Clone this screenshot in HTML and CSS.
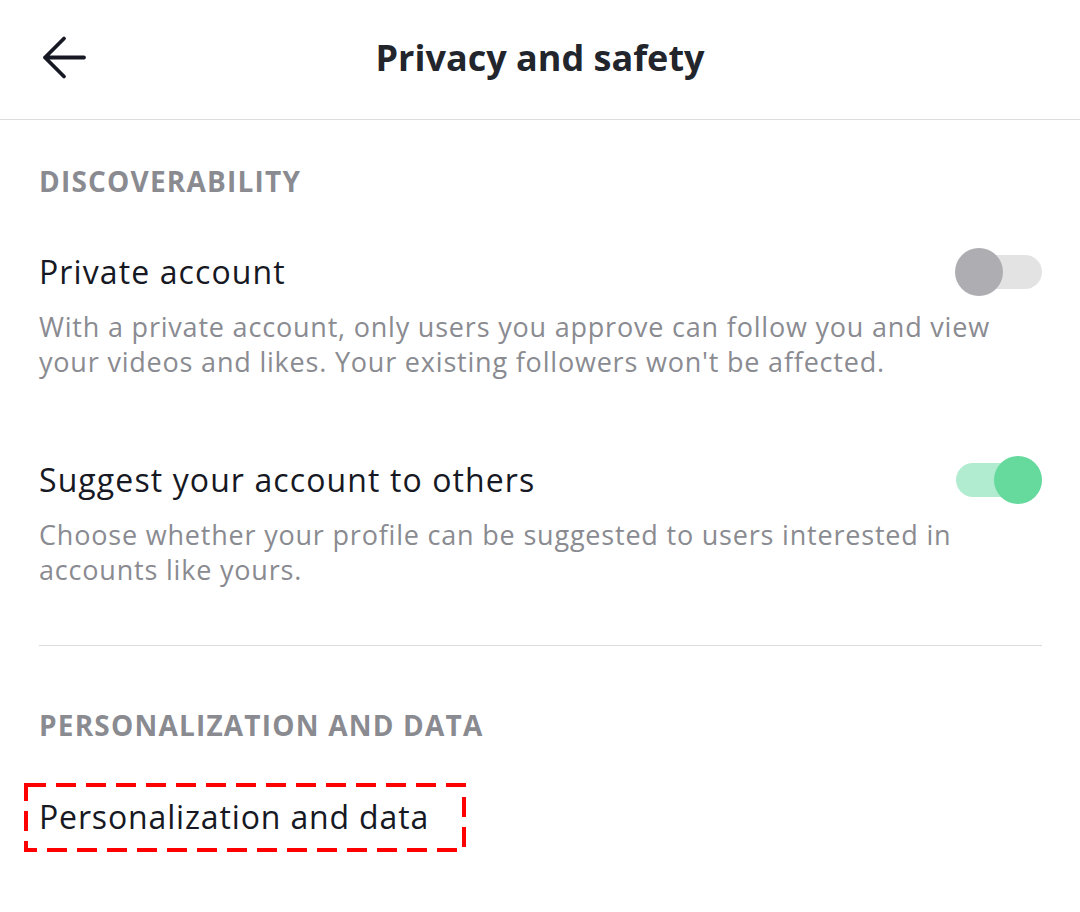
FILE: index.html
```html
<!DOCTYPE html>
<html>
<head>
<meta charset="utf-8">
<link rel="stylesheet" href="styles.css">
</head>
<body>
<header class="topbar">
  <button class="back" aria-label="Back">
    <svg width="48" height="48" viewBox="0 0 48 48"><path d="M24 4.5 L5 23.5 L24 42.5 M5 23.5 H44" fill="none" stroke="#161823" stroke-width="3.8" stroke-linecap="round" stroke-linejoin="round"/></svg>
  </button>
  <h1 class="title">Privacy and safety</h1>
</header>
<main class="content">
  <section class="group">
    <h2 class="group-title">DISCOVERABILITY</h2>
    <div class="setting">
      <div class="setting-row">
        <span class="setting-name">Private account</span>
        <span class="toggle off"><span class="knob"></span></span>
      </div>
      <p class="setting-desc">With a private account, only users you approve can follow you and view your videos and likes. Your existing followers won't be affected.</p>
    </div>
    <div class="setting">
      <div class="setting-row">
        <span class="setting-name">Suggest your account to others</span>
        <span class="toggle on"><span class="knob"></span></span>
      </div>
      <p class="setting-desc">Choose whether your profile can be suggested to users interested in accounts like yours.</p>
    </div>
  </section>
  <section class="group second">
    <h2 class="group-title">PERSONALIZATION AND DATA</h2>
    <div class="link-row">
      <span class="highlight">Personalization and data
        <svg class="dash" width="442" height="69" viewBox="0 0 442 69"><rect x="2" y="2" width="438" height="65" fill="none" stroke="#ff0000" stroke-width="4" stroke-dasharray="20 10"/></svg>
      </span>
    </div>
  </section>
</main>
</body>
</html>
```
FILE: styles.css
```css
* { box-sizing: border-box; }
html, body { margin: 0; padding: 0; background: #fff; }
body {
  width: 1080px;
  height: 912px;
  font-family: "Open Sans", "Lato", sans-serif;
  color: #161823;
  overflow: hidden;
}
.topbar {
  height: 120px;
  border-bottom: 1px solid #dcdcdc;
  display: flex;
  align-items: center;
  justify-content: center;
  position: relative;
}
.back {
  position: absolute;
  left: 40px;
  top: 34px;
  border: 0;
  background: none;
  padding: 0;
  width: 48px;
  height: 48px;
}
.back svg { display: block; }
.title {
  margin: 0;
  font-size: 36px;
  font-weight: 700;
  line-height: 40px;
  padding-bottom: 4px;
  color: #23252d;
}
.content { padding: 0 38px 0 39px; }
.group-title {
  margin: 0;
  font-size: 28px;
  font-weight: 700;
  color: #8a8b91;
  line-height: 32px;
  letter-spacing: 1.2px;
}
.group:first-child .group-title { padding-top: 45px; }
.group:first-child { border-bottom: 1px solid #dcdcdc; padding-bottom: 58px; }
.setting { margin-top: 51px; }
.setting + .setting { margin-top: 77px; }
.setting-row {
  display: flex;
  justify-content: space-between;
  align-items: center;
  height: 48px;
}
.setting-name { font-size: 32px; line-height: 48px; letter-spacing: 1.1px; }
.setting-desc {
  margin: 13px 0 0;
  font-size: 27px;
  line-height: 35px;
  color: #8a8b91;
  letter-spacing: 0.8px;
}
.toggle {
  width: 86px;
  height: 34px;
  border-radius: 17px;
  position: relative;
  display: block;
}
.toggle .knob {
  position: absolute;
  top: -7px;
  width: 48px;
  height: 48px;
  border-radius: 50%;
}
.toggle.off { background: #e3e3e4; }
.toggle.off .knob { left: -1px; background: #aeadb2; }
.toggle.on { background: #b1ecd0; }
.toggle.on .knob { right: 0; background: #66d99d; }
.second .group-title { padding-top: 63px; }
.link-row { margin-top: 56px; }
.highlight {
  position: relative;
  display: inline-block;
  font-size: 32px;
  line-height: 40px;
  letter-spacing: 0.85px;
}
.dash {
  position: absolute;
  left: -15px;
  top: -14px;
}
```
